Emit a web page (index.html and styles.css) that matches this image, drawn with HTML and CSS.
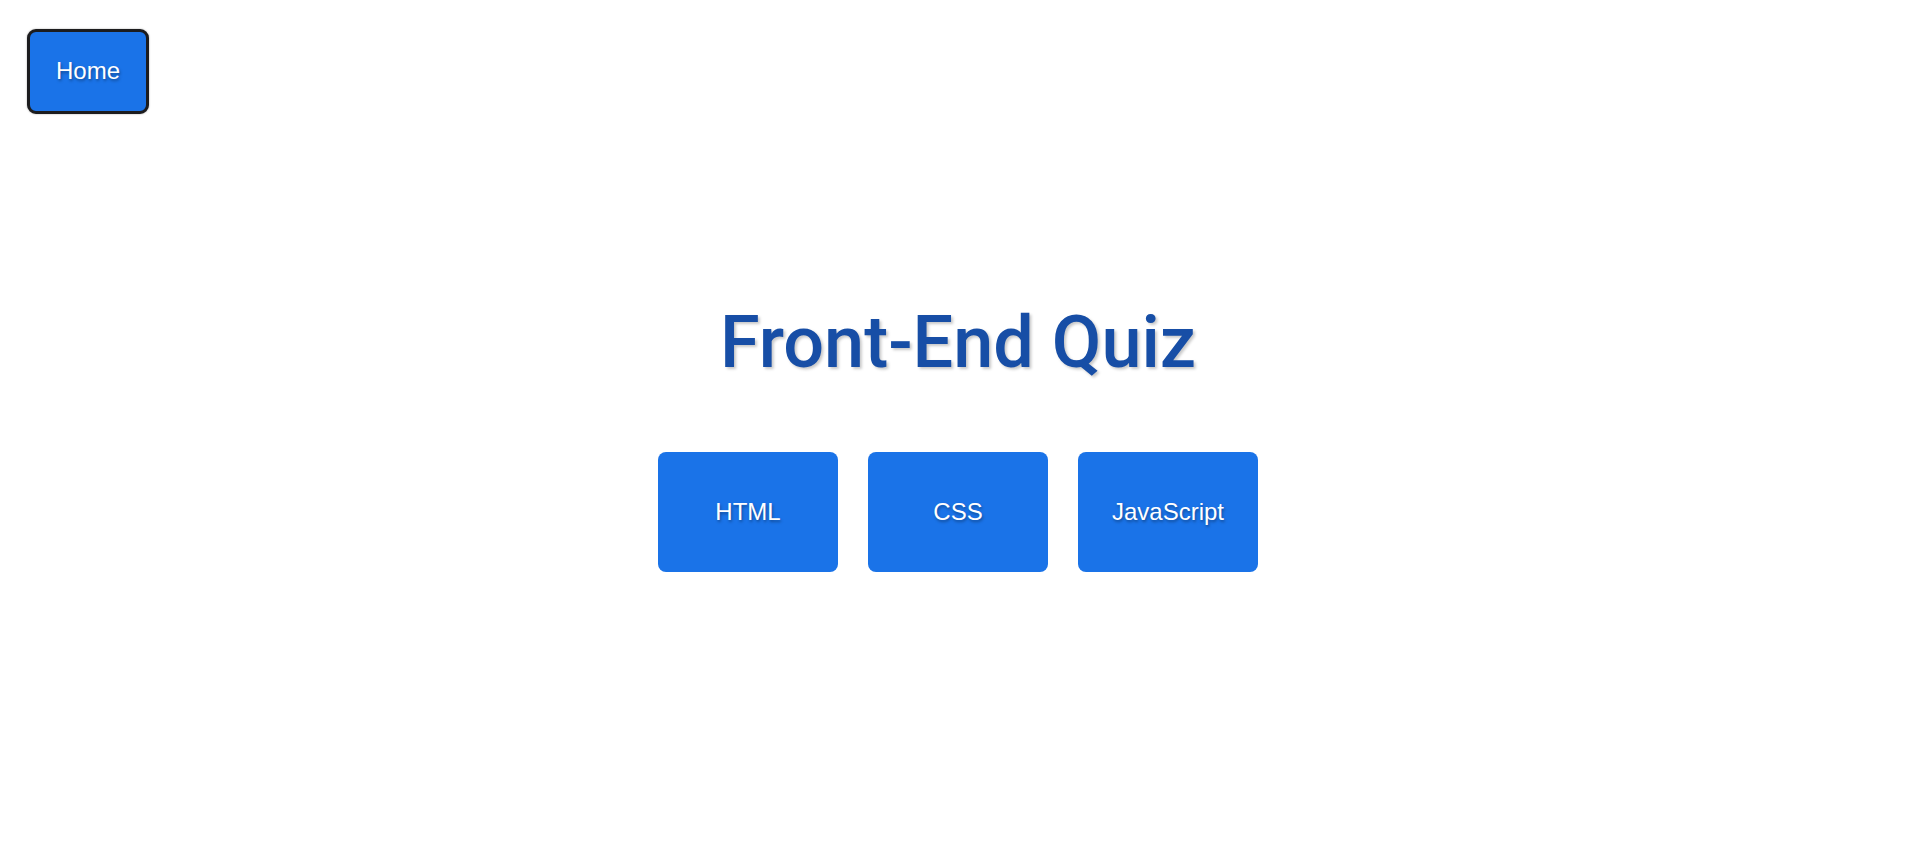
FILE: index.html
```html
<!DOCTYPE html>
<html lang="en">
<head>
<meta charset="utf-8">
<title>Front-End Quiz</title>
<link rel="stylesheet" href="styles.css">
</head>
<body>
<header class="topbar">
  <button class="home-btn">Home</button>
</header>
<main class="main">
  <h1 class="title">Front-End Quiz</h1>
  <div class="categories">
    <button class="cat-btn">HTML</button>
    <button class="cat-btn">CSS</button>
    <button class="cat-btn">JavaScript</button>
  </div>
</main>
</body>
</html>
```
FILE: styles.css
```css
html, body {
  margin: 0;
  padding: 0;
  background: #ffffff;
}
body {
  font-family: "Liberation Sans", Arial, sans-serif;
}
.topbar {
  padding: 29px 0 0 27px;
  display: flex;
}
.home-btn {
  font-family: "Liberation Sans", Arial, sans-serif;
  font-size: 24px;
  line-height: 28px;
  color: #ffffff;
  background: #1a73e8;
  border: 3px solid #1c1c1e;
  border-radius: 9px;
  padding: 25px 26px 26px;
  text-shadow: 1px 2px 3px rgba(0, 0, 0, 0.35);
  box-shadow: 0 0 2px rgba(0, 0, 0, 0.35);
  cursor: pointer;
}
.main {
  display: flex;
  flex-direction: column;
  align-items: center;
  padding-left: 11px;
  padding-top: 187px;
}
.title {
  margin: 0;
  font-family: Roboto, "Liberation Sans", sans-serif;
  font-weight: 500;
  font-size: 72px;
  line-height: 84px;
  color: #174ea6;
  text-shadow: 2px 2px 3px rgba(0, 0, 0, 0.22);
}
.categories {
  margin-top: 67px;
  display: flex;
  gap: 30px;
}
.cat-btn {
  width: 180px;
  height: 120px;
  font-family: "Liberation Sans", Arial, sans-serif;
  font-size: 24px;
  color: #ffffff;
  background: #1a73e8;
  border: none;
  border-radius: 8px;
  text-shadow: 1px 2px 3px rgba(0, 0, 0, 0.35);
  cursor: pointer;
}
```
